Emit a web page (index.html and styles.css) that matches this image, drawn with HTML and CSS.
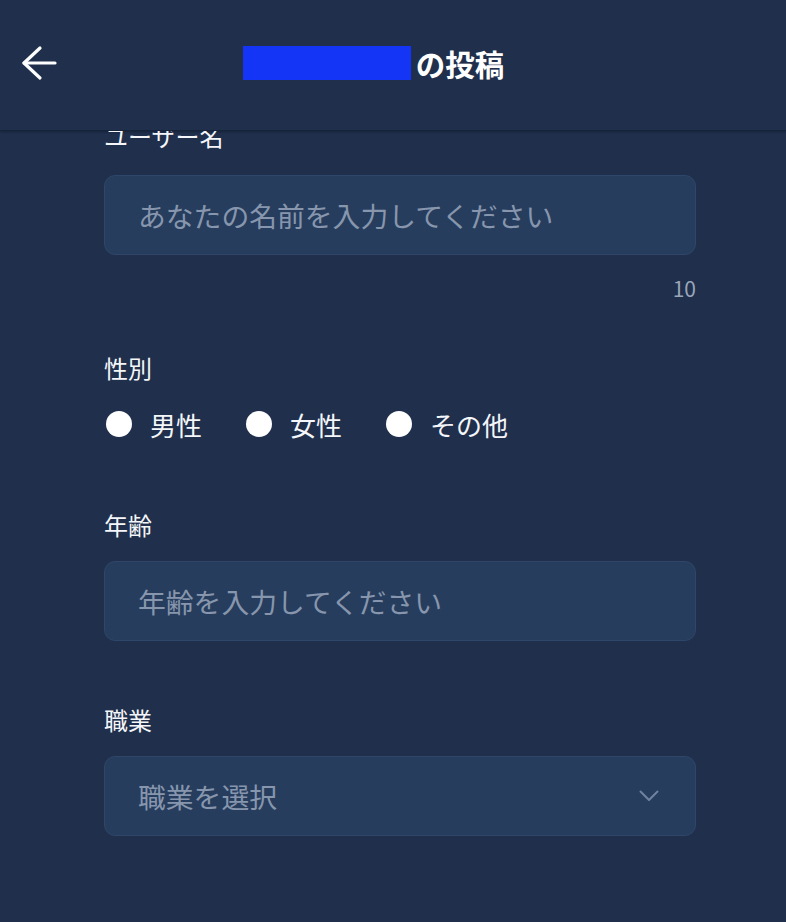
FILE: index.html
```html
<!DOCTYPE html>
<html lang="ja">

<head>
    <meta charset="UTF-8">
    <meta name="viewport" content="width=device-width, initial-scale=1.0">
    <title>投稿</title>
    <link rel="stylesheet" href="styles.css">
</head>

<body>
    <header class="topbar">
        <button class="back-btn" aria-label="戻る">
            <svg width="36" height="36" viewBox="0 0 36 36" fill="none" stroke="#ffffff" stroke-width="3.2" stroke-linecap="round" stroke-linejoin="round">
                <path d="M3 18 H34" />
                <path d="M19 3 L3 18 L19 33" />
            </svg>
        </button>
        <h1 class="title"><span class="redacted"></span>の投稿</h1>
        <div></div>
    </header>

    <main class="content">
        <form class="post-form">
            <!-- ユーザー名 -->
            <div class="field field-counted">
                <label class="label label-first" for="username">ユーザー名</label>
                <input class="text-input" type="text" id="username" placeholder="あなたの名前を入力してください">
                <p class="counter">10</p>
            </div>

            <!-- 性別 -->
            <div class="field field-radio">
                <p class="label">性別</p>
                <div class="radios">
                    <label class="radio"><input type="radio" name="gender" value="male"><span>男性</span></label>
                    <label class="radio"><input type="radio" name="gender" value="female"><span>女性</span></label>
                    <label class="radio"><input type="radio" name="gender" value="other"><span>その他</span></label>
                </div>
            </div>

            <!-- 年齢 -->
            <div class="field">
                <label class="label" for="age">年齢</label>
                <input class="text-input" type="text" id="age" placeholder="年齢を入力してください">
            </div>

            <!-- 職業 -->
            <div class="field">
                <label class="label" for="job">職業</label>
                <div class="select-box" id="job">
                    <span>職業を選択</span>
                    <svg width="20" height="12" viewBox="0 0 20 12" fill="none" stroke="#6f82a0" stroke-width="2" stroke-linecap="round" stroke-linejoin="round">
                        <path d="M1.5 1.5 L10 10 L18.5 1.5" />
                    </svg>
                </div>
            </div>
        </form>
    </main>
</body>

</html>
```

FILE: styles.css
```css
* {
    box-sizing: border-box;
}

html,
body {
    margin: 0;
    height: 100%;
}

body {
    background-color: #1f2f4c;
    color: #f4f6f9;
    font-family: "Noto Sans CJK JP", "Noto Sans", sans-serif;
    overflow: hidden;
}

.topbar {
    display: grid;
    grid-template-columns: 80px 1fr 80px;
    align-items: center;
    height: 131px;
    padding-bottom: 4px;
    border-bottom: 1px solid #16243b;
    box-shadow: 0 1px 2px rgba(10, 18, 32, 0.4);
    background-color: #1f2f4c;
}

.back-btn {
    background: none;
    border: none;
    padding: 0;
    margin-left: 21px;
    width: 36px;
    height: 36px;
    cursor: pointer;
}

.back-btn svg {
    display: block;
}

.title {
    margin: 0;
    padding-right: 39px;
    display: flex;
    justify-content: center;
    align-items: center;
    gap: 5px;
    font-size: 29.5px;
    font-weight: 700;
    color: #ffffff;
}

.redacted {
    display: inline-block;
    width: 168px;
    height: 34px;
    background-color: #1434f6;
}

.content {
    height: calc(100% - 131px);
    overflow: hidden;
    padding: 0 90px 0 104px;
}

.post-form {
    display: flex;
    flex-direction: column;
}

.field {
    margin-bottom: 61px;
}

.field-counted {
    margin-bottom: 47px;
}

.field-radio {
    margin-bottom: 63px;
}

.label {
    display: block;
    margin: 0 0 18px;
    font-size: 24px;
    line-height: 36px;
    color: #f4f6f9;
}

.label-first {
    margin-top: -13px;
    margin-bottom: 21px;
}

.text-input,
.select-box {
    display: flex;
    align-items: center;
    width: 100%;
    height: 80px;
    padding: 0 36px 0 33px;
    background-color: #263d5e;
    border: 1px solid #2f4668;
    border-radius: 11px;
    font-family: inherit;
    font-size: 27.8px;
    color: #f4f6f9;
    outline: none;
}

.text-input::placeholder {
    color: #8796ad;
}

.select-box {
    justify-content: space-between;
    color: #8796ad;
    cursor: pointer;
}

.counter {
    margin: 18px 0 0;
    text-align: right;
    font-size: 21px;
    line-height: 30px;
    color: #9aa6b8;
}

.radios {
    display: flex;
    gap: 42px;
    height: 40px;
    margin-top: 18px;
    align-items: center;
}

.radio {
    display: flex;
    align-items: center;
    gap: 18px;
    font-size: 26px;
    color: #f4f6f9;
    cursor: pointer;
}

.radio input {
    appearance: none;
    width: 26px;
    height: 26px;
    margin: 0 0 0 2px;
    border-radius: 50%;
    background-color: #ffffff;
}

.radio input:checked {
    box-shadow: inset 0 0 0 7px #3897f0;
}
```
